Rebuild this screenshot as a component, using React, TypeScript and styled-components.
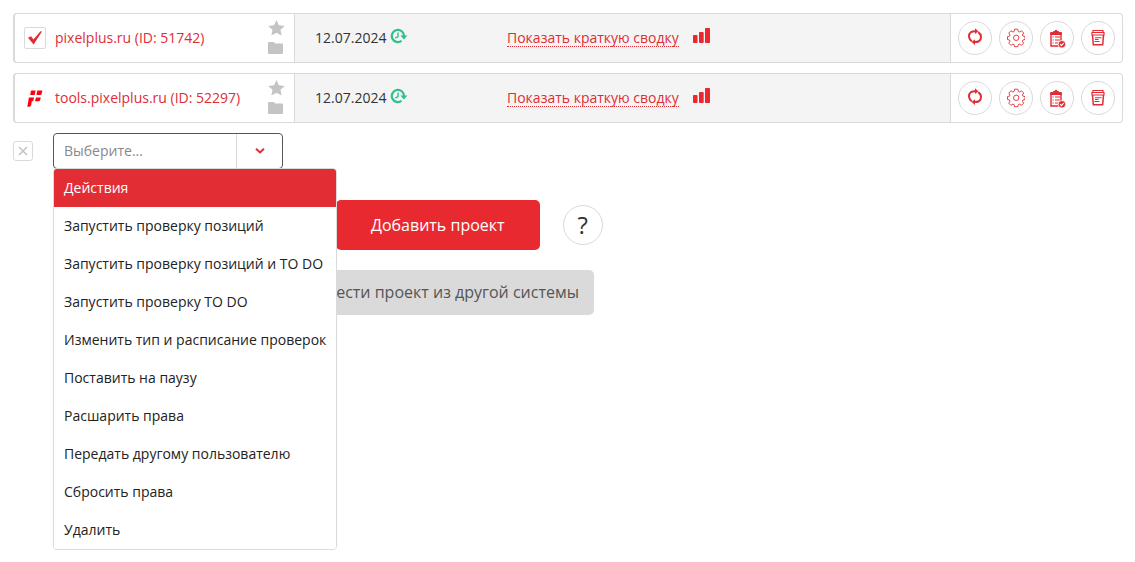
import React, { useState } from 'react';
import styled, { createGlobalStyle, css } from 'styled-components';

const GlobalStyle = createGlobalStyle`
  * { box-sizing: border-box; }
  body {
    margin: 0;
    background: #fff;
    color: #333;
    font: 14px/20px "Open Sans", "Noto Sans", sans-serif;
  }
  button, input { font: inherit; }
`;

const Page = styled.main`
  display: flex;
  flex-direction: column;
  gap: 10px;
  min-height: 100vh;
  padding: 13px 12px 12px 13px;
`;

const ProjectRow = styled.article`
  display: flex;
  height: 50px;
  border: 1px solid #dadada;
  border-left-width: 2px;
  border-radius: 4px;
`;

const ProjectCell = styled.div`
  display: flex;
  align-items: center;
  flex: 0 0 280px;
  gap: 9px;
  padding: 0 9px;
  border-right: 1px solid #dadada;
`;

const Favicon = styled.span<{ $framed?: boolean }>`
  display: flex;
  align-items: center;
  justify-content: center;
  width: 22px;
  height: 22px;
  border-radius: 2px;
  ${(p) => p.$framed && css`border: 1px solid #dadada;`}
`;

const ProjectLink = styled.a`
  flex: 1;
  color: #e02d36;
  text-decoration: none;
`;

const Marks = styled.div`
  display: flex;
  flex-direction: column;
  gap: 4px;
`;

const MarkButton = styled.button`
  display: block;
  height: 16px;
  padding: 0;
  border: 0;
  background: none;
  color: #c4c4c4;
  svg { display: block; }
`;

const SummaryCell = styled.div`
  display: flex;
  align-items: center;
  flex: 1;
  padding-left: 20px;
  background: #f4f4f4;
`;

const CheckDate = styled.div`
  display: flex;
  flex: 0 0 192px;
  gap: 4px;
`;

const SummaryLink = styled.a`
  color: #e02d36;
  line-height: 16px;
  border-bottom: 1px dotted #e02d36;
  text-decoration: none;
`;

const ChartLink = styled.a`
  display: block;
  height: 20px;
  margin-left: 14px;
  svg { display: block; }
`;

const Actions = styled.div`
  display: flex;
  align-items: center;
  gap: 7px;
  padding: 0 7px;
  border-left: 1px solid #dadada;
`;

const RoundButton = styled.button<{ $large?: boolean }>`
  display: flex;
  align-items: center;
  justify-content: center;
  width: ${(p) => (p.$large ? 40 : 34)}px;
  height: ${(p) => (p.$large ? 40 : 34)}px;
  padding: 0;
  border: 1px solid #dadada;
  border-radius: 50%;
  background: #fff;
  color: #333;
  font-size: 24px;
  line-height: 32px;
`;

const BulkBar = styled.div`
  display: flex;
  align-items: center;
  gap: 20px;
`;

const ClearButton = styled.button`
  display: flex;
  align-items: center;
  justify-content: center;
  width: 20px;
  height: 20px;
  padding: 0;
  border: 1px solid #dadada;
  border-radius: 3px;
  background: #fff;
`;

const Combo = styled.div`
  position: relative;
  width: 230px;
`;

const ComboBox = styled.div`
  display: flex;
  height: 36px;
  border: 1px solid #555;
  border-radius: 4px;
  background: #fff;
`;

const ComboInput = styled.input`
  flex: 1;
  min-width: 0;
  padding: 0 10px;
  border: 0;
  outline: 0;
  background: none;
  &::placeholder { color: #888; opacity: 1; }
`;

const ComboToggle = styled.button`
  display: flex;
  align-items: center;
  justify-content: center;
  width: 46px;
  padding: 0;
  border: 0;
  border-left: 1px solid #dadada;
  background: none;
`;

const Menu = styled.ul`
  position: absolute;
  top: 100%;
  left: 0;
  z-index: 1;
  margin: -1px 0 0;
  padding: 0;
  overflow: hidden;
  list-style: none;
  white-space: nowrap;
  border: 1px solid #dadada;
  border-radius: 4px;
  background: #fff;
`;

const MenuItem = styled.li<{ $active: boolean }>`
  padding: 9px 10px;
  color: ${(p) => (p.$active ? '#fff' : '#222')};
  background: ${(p) => (p.$active ? '#e22d35' : '#fff')};
`;

const AddArea = styled.section`
  display: grid;
  justify-items: center;
  gap: 20px;
  width: fit-content;
  margin: 21px 0 0 250px;
`;

const AddLine = styled.div`
  display: grid;
  grid-template-columns: minmax(0, 1fr) auto minmax(0, 1fr);
  align-items: center;
  column-gap: 23px;
  width: 100%;
  padding-left: 10px;
`;

const AddButton = styled.button`
  grid-column: 2;
  height: 50px;
  padding: 0 35px;
  border: 0;
  border-radius: 5px;
  background: #e8292f;
  color: #fff;
  font-size: 16px;
  font-weight: 500;
  white-space: nowrap;
`;

const ImportButton = styled.button`
  padding: 12px 15px 13px;
  border: 0;
  border-radius: 5px;
  background: #dadada;
  color: #555;
  font-size: 16px;
  white-space: nowrap;
`;

const RED = '#e02d36';

const CheckLogo = () => (
  <svg width="16" height="16" viewBox="0 0 16 16" aria-hidden="true">
    <path d="M1 7.8 4 6.2l2.4 3.2L13.5 1.3 15 1.6 6.6 14.5z" fill={RED} />
  </svg>
);

const PixelLogo = () => (
  <svg width="16" height="17" viewBox="0 0 16 17" fill="#fb0012" aria-hidden="true">
    <path d="M4.6 .5h4L7.6 5H3.2L3.8 1.4q.1-.9.8-.9zM10.4 .5h5L14.7 3.7Q14.4 5 13.3 5H9.4zM1.900 7.500h5.200L6.500 10q-.4 1.300-1.600 1.300H4.800L4.200 15q-.3 1.700-1.900 1.700H.3zM9 7.500h4.800L13.200 10q-.4 1.300-1.600 1.300H8z" />
  </svg>
);

const StarIcon = () => (
  <svg width="17" height="16" viewBox="0 0 17 16" fill="currentColor" aria-hidden="true">
    <path d="m8.500 0 2.400 5.200 5.900.7-4.300 3.900 1.100 5.700-5.100-2.800-5.100 2.800 1.100-5.700L.2 5.900l5.900-.7z" />
  </svg>
);

const FolderIcon = () => (
  <svg width="15" height="16" viewBox="0 0 15 16" fill="currentColor" aria-hidden="true">
    <path d="M0 3q0-1 1-1h4.700l1.400 1.400H14q1 0 1 1V13q0 1-1 1H1q-1 0-1-1z" />
  </svg>
);

const HistoryIcon = () => (
  <svg width="18" height="16" viewBox="0 0 18 16" fill="none" aria-hidden="true">
    <path d="M11.500 12.900A6.100 6.100 0 1 1 14 8" stroke="#2dc08d" strokeWidth="2.200" />
    <path d="M10.400 7.600h7l-3.500 4z" fill="#2dc08d" />
    <path d="M8 4.600v4L5.300 10.200" stroke="#2dc08d" strokeWidth="1.400" />
  </svg>
);

const BarsIcon = () => (
  <svg width="17" height="15" viewBox="0 0 17 15" fill="#e8292f" aria-hidden="true">
    <rect y="7" width="4.500" height="8" rx="0.800" />
    <rect x="6" y="4" width="4.700" height="11" rx="0.800" />
    <rect x="12" width="5" height="15" rx="0.800" />
  </svg>
);

const RefreshIcon = () => (
  <svg width="16" height="20" viewBox="0 0 16 20" fill="none" aria-hidden="true">
    <path d="M4.900 13.300C1.200 11 1.200 6.300 3.800 4.300Q5.300 3.100 9 3.200M11.200 4.100c3.600 2.300 3.600 7 .8 9q-1.500 1.100-5 1" stroke={RED} strokeWidth="2" />
    <path d="M8 .3v5.800l3.400-2.900zM8 11.200V17l-3.400-2.900z" fill={RED} />
  </svg>
);

const GearIcon = () => (
  <svg width="18" height="20" viewBox="0 0 18 20" fill="none" stroke={RED} strokeWidth="0.900" strokeLinejoin="round" aria-hidden="true">
    <path d="M7.600 1.200h3.200l.5 2.300 1.200.5 2-1.200 2.200 2.200-1.300 2 .5 1.100 2.100.5v2.900l-2.100.5-.5 1.200 1.200 2-2.100 2.100-2-1.200-1.200.5-.5 2.100H7.600l-.5-2.100-1.200-.5-2 1.200-2.100-2.100 1.200-2-.5-1.200-2-.5V8.600l2-.5.5-1.100-1.200-2 2.100-2.200 2 1.200 1.200-.5z" />
    <circle cx="9.200" cy="9.800" r="2.700" />
  </svg>
);

const ClipboardIcon = () => (
  <svg width="17" height="22" viewBox="0 0 17 22" fill="none" aria-hidden="true">
    <path d="M2 6v13h10V6" stroke={RED} strokeWidth="1.400" />
    <path d="M1.300 5h2.900V4h1.500Q5.900 2.700 7 2.700T8.300 4h1.500v1h3v3H1.300z" fill={RED} />
    <path d="M3.500 10h1.200M3.500 13h1.200M3.500 16h1.200M6 10h5M6 13h5M6 16h3" stroke={RED} strokeWidth="1" />
    <circle cx="12.900" cy="17.300" r="3.800" fill={RED} stroke="#fff" strokeWidth="0.800" />
    <path d="m11.100 17.200 1.300 1.400 2.300-2.500" stroke="#fff" strokeWidth="1.100" />
  </svg>
);

const ArchiveIcon = () => (
  <svg width="14" height="20" viewBox="0 0 14 20" fill="none" stroke={RED} aria-hidden="true">
    <path d="M2 4.500V2.500h10v2M1 7V4.500h12V7M.5 7h13" strokeWidth="1.200" />
    <path d="M1.500 7l.8 9.800h9.400l.8-9.800" strokeWidth="1.500" />
    <path d="M4 9.700h6.500M4 11.500h3.500M3.500 13.500h5" strokeWidth="1.100" />
  </svg>
);

const projects = [
  { name: 'pixelplus.ru (ID: 51742)', date: '12.07.2024', framed: true, logo: <CheckLogo /> },
  { name: 'tools.pixelplus.ru (ID: 52297)', date: '12.07.2024', framed: false, logo: <PixelLogo /> },
];

const rowActions = [
  { label: 'Обновить', icon: <RefreshIcon /> },
  { label: 'Настройки', icon: <GearIcon /> },
  { label: 'Задачи', icon: <ClipboardIcon /> },
  { label: 'Архив', icon: <ArchiveIcon /> },
];

const options = [
  'Действия',
  'Запустить проверку позиций',
  'Запустить проверку позиций и TO DO',
  'Запустить проверку TO DO',
  'Изменить тип и расписание проверок',
  'Поставить на паузу',
  'Расшарить права',
  'Передать другому пользователю',
  'Сбросить права',
  'Удалить',
];

export default function App() {
  const [open, setOpen] = useState(true);
  const [active, setActive] = useState(0);

  return (
    <>
      <GlobalStyle />
      <Page>
        {projects.map((project) => (
          <ProjectRow key={project.name}>
            <ProjectCell>
              <Favicon $framed={project.framed}>{project.logo}</Favicon>
              <ProjectLink href="#project">{project.name}</ProjectLink>
              <Marks>
                <MarkButton type="button" aria-label="В избранное"><StarIcon /></MarkButton>
                <MarkButton type="button" aria-label="В папку"><FolderIcon /></MarkButton>
              </Marks>
            </ProjectCell>
            <SummaryCell>
              <CheckDate>{project.date}<HistoryIcon /></CheckDate>
              <SummaryLink href="#summary">Показать краткую сводку</SummaryLink>
              <ChartLink href="#chart" aria-label="График"><BarsIcon /></ChartLink>
            </SummaryCell>
            <Actions>
              {rowActions.map((action) => (
                <RoundButton key={action.label} type="button" aria-label={action.label}>
                  {action.icon}
                </RoundButton>
              ))}
            </Actions>
          </ProjectRow>
        ))}
        <BulkBar>
          <ClearButton type="button" aria-label="Снять выбор">
            <svg width="10" height="10" viewBox="0 0 10 10" stroke="#c4c4c4" strokeWidth="1.600" aria-hidden="true">
              <path d="m1 1 8 8M9 1 1 9" />
            </svg>
          </ClearButton>
          <Combo>
            <ComboBox>
              <ComboInput
                role="combobox"
                aria-label="Действие с проектами"
                aria-expanded={open}
                aria-controls="bulk-menu"
                placeholder="Выберите..."
              />
              <ComboToggle type="button" aria-label="Открыть список" onClick={() => setOpen(!open)}>
                <svg width="10" height="6" viewBox="0 0 10 6" fill="none" stroke={RED} strokeWidth="2" aria-hidden="true">
                  <path d="m1 .8 4 3.700L9 .8" />
                </svg>
              </ComboToggle>
            </ComboBox>
            {open && (
              <Menu id="bulk-menu" role="listbox" aria-label="Действия">
                {options.map((option, index) => (
                  <MenuItem
                    key={option}
                    role="option"
                    aria-selected={index === active}
                    $active={index === active}
                    onMouseEnter={() => setActive(index)}
                  >
                    {option}
                  </MenuItem>
                ))}
              </Menu>
            )}
          </Combo>
        </BulkBar>
        <AddArea>
          <AddLine>
            <AddButton type="button">Добавить проект</AddButton>
            <RoundButton type="button" $large aria-label="Справка">?</RoundButton>
          </AddLine>
          <ImportButton type="button">Перенести проект из другой системы</ImportButton>
        </AddArea>
      </Page>
    </>
  );
}
